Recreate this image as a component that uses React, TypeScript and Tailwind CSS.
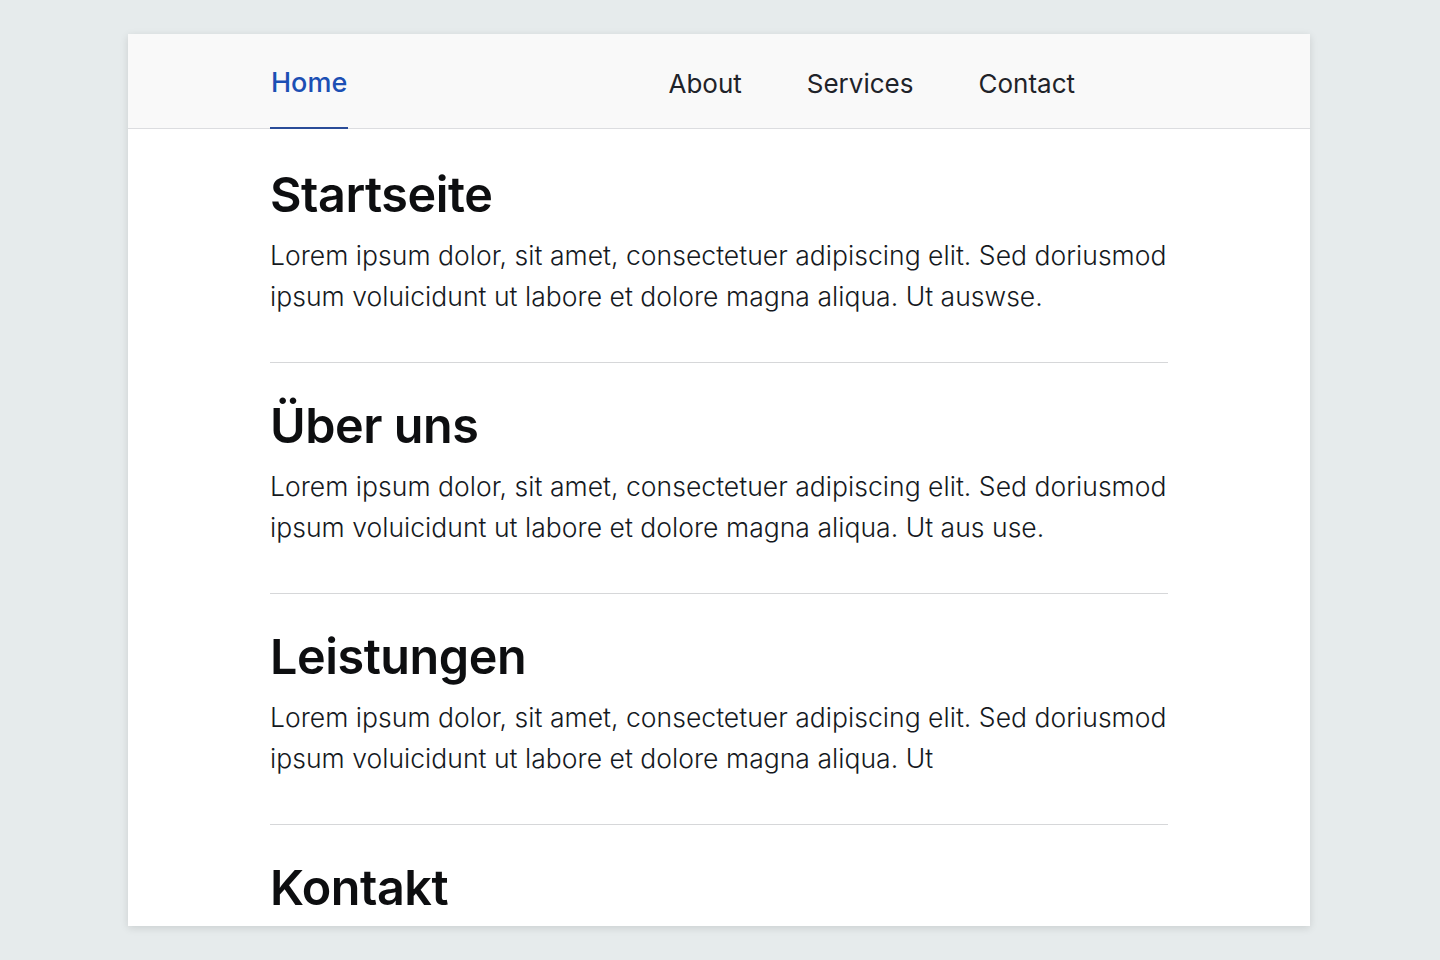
import React from "react";

const sections = [
  { title: "Startseite", text: "Lorem ipsum dolor, sit amet, consectetuer adipiscing elit. Sed doriusmod ipsum voluicidunt ut labore et dolore magna aliqua. Ut auswse." },
  { title: "Über uns", text: "Lorem ipsum dolor, sit amet, consectetuer adipiscing elit. Sed doriusmod ipsum voluicidunt ut labore et dolore magna aliqua. Ut aus use." },
  { title: "Leistungen", text: "Lorem ipsum dolor, sit amet, consectetuer adipiscing elit. Sed doriusmod ipsum voluicidunt ut labore et dolore magna aliqua. Ut" },
];

export default function App() {
  return (
    <div className="w-[1440px] h-[960px] bg-[#e6ebec] pt-[34px] pl-[128px] overflow-hidden" style={{ fontFamily: "Inter, 'Noto Sans', sans-serif" }}>
      <div className="w-[1182px] h-[892px] bg-white shadow-[0_2px_8px_rgba(0,0,0,0.12)] overflow-hidden flex flex-col">
        <nav className="h-[95px] shrink-0 bg-[#f9f9f9] border-b border-[#dcdde0] flex items-stretch px-[142px]">
          <a className="flex items-center pt-[6px] text-[27px] text-[#1c4fb4] font-medium border-b-2 border-[#2a4c98] -mb-px px-px">
            Home
          </a>
          <div className="ml-auto mr-[93px] pt-[5px] flex items-center gap-[65px] text-[26px] text-[#1f2329]">
            <span>About</span>
            <span>Services</span>
            <span>Contact</span>
          </div>
        </nav>
        <main className="px-[142px] pt-[36px]">
          {sections.map((s) => (
            <section key={s.title} className="border-b border-[#d6d7d9] pb-[45px] mb-[33px]">
              <h2 className="text-[48.5px] leading-[60px] font-semibold text-[#0d0e10] tracking-[-0.45px]">{s.title}</h2>
              <p className="mt-[10px] text-[26.5px] leading-[41px] font-light text-[#15191e] tracking-[0.03px]">{s.text}</p>
            </section>
          ))}
          <h2 className="text-[48.5px] leading-[60px] font-semibold text-[#0d0e10] tracking-[-0.45px]">Kontakt</h2>
        </main>
      </div>
    </div>
  );
}
